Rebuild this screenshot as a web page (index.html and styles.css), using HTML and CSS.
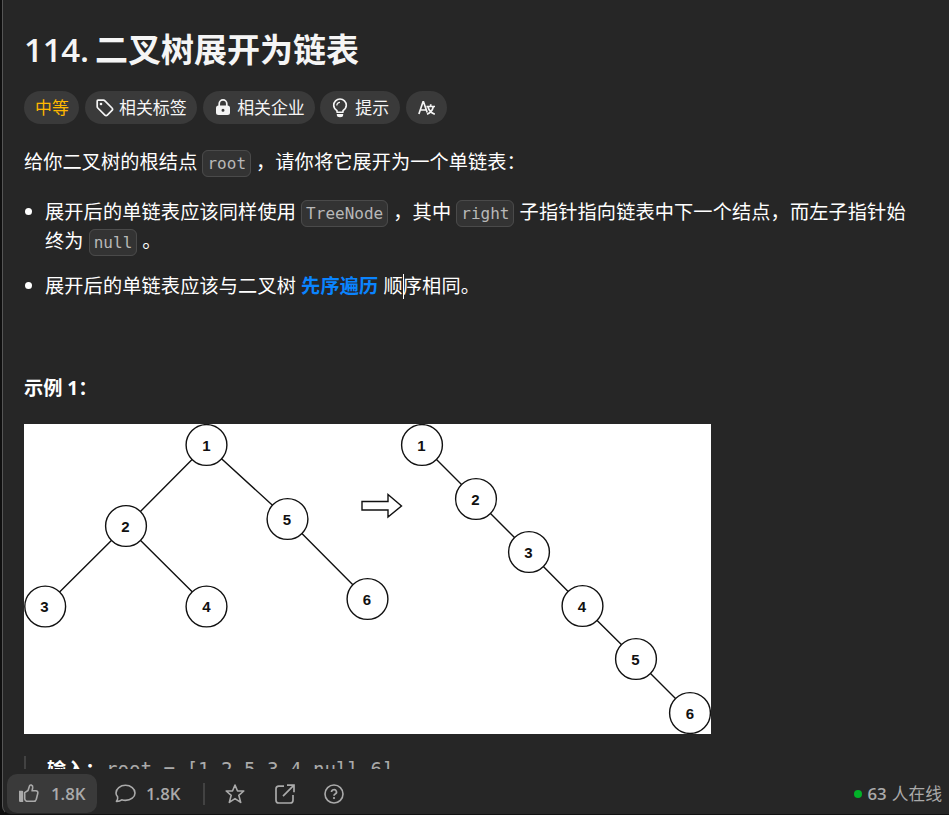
FILE: index.html
```html
<!DOCTYPE html>
<html lang="zh-CN">
<head>
<meta charset="utf-8">
<title>114. 二叉树展开为链表</title>
<link rel="stylesheet" href="styles.css">
</head>
<body>
<main class="panel">
  <section class="content">
    <h1 class="title"><span class="num">114.</span><span>二叉树展开为链表</span></h1>
    <div class="tags">
      <span class="pill level">中等</span>
      <span class="pill tag"><svg class="ico" width="18" height="18" viewBox="0 0 18 18"><path d="M1.200 2v5.500c0 .6.2 1.100.6 1.500l7.100 7.100c.7.7 1.700.7 2.400 0l4.700-4.700c.7-.7.7-1.700 0-2.400L8.900 1.800c-.4-.4-.9-.6-1.500-.6H2c-.5 0-.8.3-.8.8z" fill="none" stroke="currentColor" stroke-width="1.700"/><circle cx="5" cy="5" r="1.300" fill="currentColor"/></svg>相关标签</span>
      <span class="pill lock"><svg class="ico" width="16" height="17" viewBox="0 0 16 17"><path d="M4.200 7V4.700a3.800 3.800 0 0 1 7.600 0V7" fill="none" stroke="currentColor" stroke-width="1.700"/><path fill-rule="evenodd" d="M3.500 6.500h9A2.500 2.500 0 0 1 15 9v4.500a2.500 2.500 0 0 1-2.500 2.500h-9A2.500 2.500 0 0 1 1 13.500V9a2.500 2.500 0 0 1 2.500-2.500zM8 9.700a1.500 1.500 0 1 0 0 3 1.500 1.500 0 0 0 0-3z" fill="currentColor"/></svg>相关企业</span>
      <span class="pill hint"><svg class="ico" width="16" height="20" viewBox="0 0 16 20"><path d="M5 14.200v-1.500C3 11.300 1.700 9.700 1.700 7.300a6.300 6.300 0 0 1 12.600 0c0 2.400-1.300 4-3.300 5.400v1.500z" fill="none" stroke="currentColor" stroke-width="1.600" stroke-linejoin="round"/><path d="M4.800 7.400A3.100 3.100 0 0 1 8 4.300" fill="none" stroke="currentColor" stroke-width="1.300"/><path d="M4.800 16h6.400v.8a3.200 2.500 0 0 1-6.400 0z" fill="currentColor"/></svg>提示</span>
      <span class="pill lang"><svg width="18" height="16" viewBox="0 0 18 16" fill="none" stroke="currentColor" stroke-width="1.700"><path d="M.9 14 5 1.800h.5L9.200 12.500M2.300 10h5.500M8.500 6.500H17M12.700 4.200v2.300M15.300 6.700c-.8 3.500-3 6.200-6.300 7.500M10 6.700c.8 3.500 3.200 6.200 6.800 7.500"/></svg></span>
    </div>
    <p class="intro">给你二叉树的根结点 <code>root</code> ，请你将它展开为一个单链表：</p>
    <ul class="rules">
      <li>展开后的单链表应该同样使用 <code>TreeNode</code> ，其中 <code>right</code> 子指针指向链表中下一个结点，而左子指针始终为 <code>null</code> 。</li>
      <li>展开后的单链表应该与二叉树 <a class="link">先序遍历</a> 顺<i class="caret"></i>序相同。</li>
    </ul>
    <p class="example">示例 1：</p>
    <svg class="figure" width="687" height="310" viewBox="24 424 687 310">
      <rect x="24" y="424" width="687" height="310" fill="#fff"/>
      <g stroke="#111" stroke-width="1.400" fill="none">
        <path d="M206.500 445 126 526 45 606.500M126 526l81 80.500M206.500 445 287.500 519 367 599M422 445l54 54 53 53 53.500 54 53.500 53 54 54"/>
        <path d="M362 501.500h26v-7l13.500 11.500-13.500 11v-7h-26z"/>
        <g fill="#fff">
          <circle cx="206.500" cy="445" r="20.400"/><circle cx="126" cy="526" r="20.400"/><circle cx="45.200" cy="606.500" r="20.400"/><circle cx="206.500" cy="606.500" r="20.400"/><circle cx="287.500" cy="519" r="20.400"/><circle cx="367.500" cy="599" r="20.400"/>
          <circle cx="422" cy="445" r="20.400"/><circle cx="476" cy="499" r="20.400"/><circle cx="529" cy="552" r="20.400"/><circle cx="582.500" cy="606" r="20.400"/><circle cx="636" cy="659" r="20.400"/><circle cx="690" cy="713" r="20.400"/>
        </g>
      </g>
      <g class="labels">
        <text x="206.500" y="450.500">1</text><text x="125.500" y="531.500">2</text><text x="44.500" y="612">3</text><text x="206.500" y="612">4</text><text x="287" y="524.500">5</text><text x="367" y="604.500">6</text>
        <text x="421.500" y="450.500">1</text><text x="475.500" y="504.500">2</text><text x="528.500" y="557.500">3</text><text x="582" y="611.500">4</text><text x="635.500" y="664.500">5</text><text x="690" y="718.500">6</text>
      </g>
    </svg>
    <div class="sample"><b>输入：</b><span>root = [1,2,5,3,4,null,6]</span></div>
  </section>
  <footer class="bar">
    <span class="btn like"><svg width="20" height="19" viewBox="0 0 20 19"><path d="M0 6.800h3.200a1 1 0 0 1 1 1V18H1.200A1.200 1.200 0 0 1 0 16.800z" fill="currentColor"/><path d="M5.700 8.600 9 6.500 10.500 2c.3-.9 1-1.200 1.800-.9 1.100.4 1.600 1.400 1.400 2.600l-.6 3.100h3.800c1.400 0 2.200 1.200 1.900 2.400l-1.500 6c-.4 1.400-1.200 2.100-2.600 2.100H8.800c-1.700 0-3.100-1-3.100-2.700z" fill="none" stroke="currentColor" stroke-width="1.600" stroke-linejoin="round"/></svg>1.8K</span>
    <span class="btn talk"><svg width="21" height="19" viewBox="0 0 21 19"><path d="M2.600 12.800C1.500 11.500 1 10.200 1 8.900 1 4.700 5.200 1.300 10.500 1.300S20 4.700 20 8.900s-4.200 7.500-9.500 7.500c-1.400 0-2.600-.2-3.800-.6-1.500 1.200-3.300 1.700-5.300 1.600 1-1 1.700-2.600 1.200-4.600z" fill="none" stroke="currentColor" stroke-width="1.600" stroke-linejoin="round"/></svg>1.8K</span>
    <i class="divider"></i>
    <svg class="star" width="20" height="20" viewBox="0 0 20 20"><path d="m10 1 2.500 6h6.300l-5 4.300 1.900 7.100L10 14.600l-5.700 3.800 1.900-7.100-5-4.300h6.300z" fill="none" stroke="currentColor" stroke-width="1.600" stroke-linejoin="round"/></svg>
    <svg class="share" width="20" height="20" viewBox="0 0 20 20"><path d="M9 2.200H3.800A2.800 2.800 0 0 0 1 5v11.200A2.800 2.800 0 0 0 3.800 19h11.400a2.800 2.800 0 0 0 2.800-2.800V11M12 1.200h7v7M18.500 1.700 8 12.200" fill="none" stroke="currentColor" stroke-width="1.700"/></svg>
    <svg class="help" width="20" height="20" viewBox="0 0 20 20"><circle cx="10" cy="10" r="9" fill="none" stroke="currentColor" stroke-width="1.600"/><path d="M7.500 8a2.500 2.300 0 1 1 3.700 2c-.8.400-1.200.8-1.200 1.700" fill="none" stroke="currentColor" stroke-width="1.700"/><circle cx="10" cy="14.100" r="1.100" fill="currentColor"/></svg>
    <span class="online"><i class="dot"></i><b>63</b> 人在线</span>
  </footer>
</main>
</body>
</html>
```
FILE: styles.css
```css
* { box-sizing: border-box; }
body {
  margin: 0;
  height: 815px;
  overflow: hidden;
  background: #0f0f0f;
  color: #fff;
  font: 19.2px/28.8px "Open Sans", "Noto Sans CJK SC", sans-serif;
}
.panel {
  height: 815px;
  margin-left: 2px;
  display: flex;
  flex-direction: column;
  background: #262626;
  border-left: 1px solid #555;
  border-bottom: 1px solid #111;
  border-bottom-left-radius: 9px;
}
.content {
  height: 769px;
  flex: none;
  overflow: hidden;
  padding: 28px 24px 0 21px;
}
.title {
  display: flex;
  gap: 9px;
  margin: 0;
  height: 44px;
  color: #f5f5f5;
  font-size: 33px;
  font-weight: 700;
  line-height: 44px;
  white-space: nowrap;
}
.num { width: 62px; font-weight: 600; letter-spacing: -.2px; }
.tags { display: flex; gap: 5.600px; margin-top: 19px; }
.pill {
  display: flex;
  align-items: center;
  height: 33px;
  border-radius: 17px;
  background: #3a3a3a;
  color: #f5f5f5;
  font-size: 16.900px;
  line-height: 35px;
  white-space: nowrap;
}
.pill .ico { flex: none; }
.level { width: 55px; padding-left: 11px; color: #ffb800; }
.tag { width: 112.500px; padding-left: 11px; gap: 5.500px; }
.lock { width: 112px; padding-left: 12.500px; gap: 6px; }
.hint { width: 80px; padding-left: 12px; gap: 7px; }
.lang { width: 41px; padding-left: 12px; }
p { margin: 0; }
.intro { margin-top: 23.500px; letter-spacing: .08px; }
code {
  padding: 3px 4px;
  border: 1px solid #4a4a4a;
  border-radius: 6px;
  background: #333;
  color: #b8b8b8;
  font: 16px/1 "DejaVu Sans Mono", monospace;
  letter-spacing: 0;
}
.rules {
  margin: 22px 0 0;
  padding: 0 16px 0 21px;
  list-style: none;
  letter-spacing: .12px;
}
.rules li { margin-bottom: 16.400px; position: relative; }
.rules li::before {
  content: "";
  position: absolute;
  left: -20px;
  top: 10px;
  width: 7px;
  height: 7px;
  border-radius: 50%;
  background: #fff;
}
.link { color: #0a84ff; font-weight: 700; }
.caret {
  display: inline-block;
  width: 1px;
  height: 25px;
  margin-right: -1px;
  vertical-align: -6px;
  background: #fff;
}
.example { margin-top: 73px; font-weight: 700; }
.figure { display: block; margin-top: 21px; }
.labels {
  font: 700 15px "Liberation Sans", sans-serif;
  text-anchor: middle;
  fill: #111;
}
.sample {
  display: flex;
  gap: 1.500px;
  height: 60px;
  margin-top: 22px;
  padding-left: 21px;
  border-left: 2px solid #424242;
  white-space: nowrap;
}
.sample span {
  color: #aaa;
  font-family: "DejaVu Sans Mono", monospace;
  letter-spacing: -.06px;
}
.bar {
  display: flex;
  align-items: center;
  height: 39px;
  margin-top: 5px;
  padding: 0 7px 0 4px;
  color: #aaa;
  font-size: 16.800px;
  line-height: 39px;
}
.btn { display: flex; align-items: center; font-weight: 600; }
.like { width: 90px; height: 39px; padding-left: 12px; gap: 12px; border-radius: 10px; background: #3a3a3a; }
.talk { width: 89px; padding-left: 18px; gap: 10px; }
.divider { width: 2px; height: 22px; margin-left: 17px; background: #424242; }
.star { margin-left: 20px; }
.share { margin-left: 30px; }
.help { margin-left: 29px; }
.online { display: flex; align-items: center; gap: 5px; margin-left: auto; }
.online b { font-weight: 600; }
.dot { width: 8px; height: 8px; border-radius: 50%; background: #02b128; }
```
